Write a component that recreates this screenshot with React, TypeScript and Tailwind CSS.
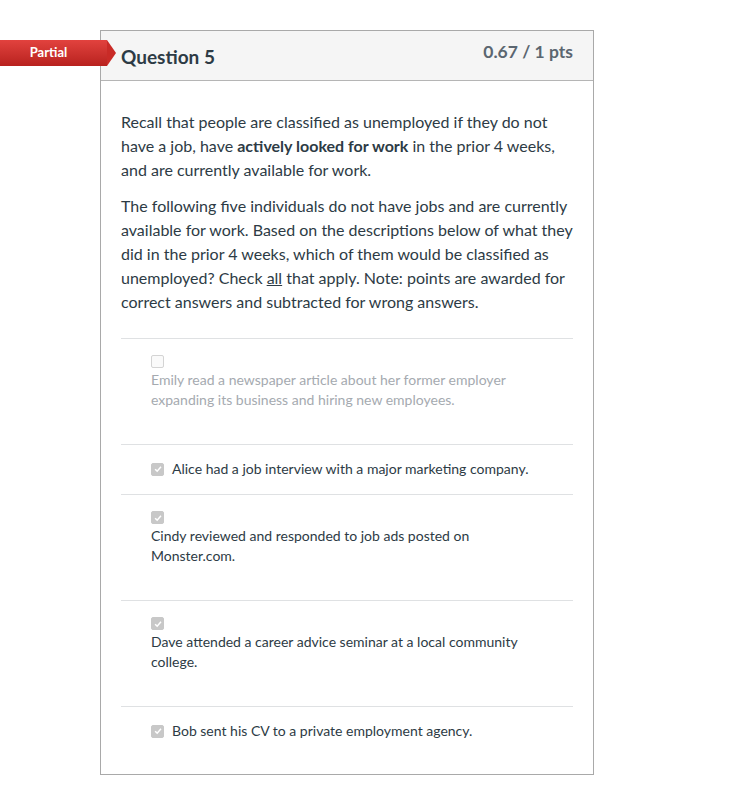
const answers = [
  {
    text: "Emily read a newspaper article about her former employer expanding its business and hiring new employees.",
    checked: false,
    inline: false,
  },
  { text: "Alice had a job interview with a major marketing company.", checked: true, inline: true },
  {
    text: "Cindy reviewed and responded to job ads posted on Monster.com.",
    checked: true,
    inline: false,
  },
  {
    text: "Dave attended a career advice seminar at a local community college.",
    checked: true,
    inline: false,
  },
  { text: "Bob sent his CV to a private employment agency.", checked: true, inline: true },
];

const Box = ({ checked }: { checked: boolean }) => (
  <span
    className={`inline-flex h-[13px] w-[13px] shrink-0 items-center justify-center rounded-[2px] border ${
      checked ? "border-[#c8c8c8] bg-[#c8c8c8]" : "border-[#d4d4d4] bg-[#fafafa]"
    }`}
  >
    {checked && (
      <svg viewBox="0 0 12 12" className="h-[10px] w-[10px]">
        <path d="M2.5 6.3 L5 8.6 L9.6 3.4" fill="none" stroke="#ffffff" strokeWidth="1.8" />
      </svg>
    )}
  </span>
);

const App = () => {
  return (
    <div className="min-h-[795px] bg-white font-['Lato','Noto_Sans',sans-serif] text-[#2d3b45]">
      <div className="relative pt-[30px]">
        {/* partial badge */}
        <div className="absolute left-0 top-[40px] flex h-[26px] items-center">
          <div className="flex h-[26px] w-[107px] items-center justify-center bg-gradient-to-b from-[#e2423e] to-[#b8211e] pr-[10px] text-[13px] font-bold text-white">
            Partial
          </div>
          <div className="h-0 w-0 border-y-[13px] border-l-[9px] border-y-transparent border-l-[#c92b27]" />
        </div>

        <div className="ml-[100px] w-[494px] border border-[#a9a9a9]">
          <div className="flex h-[50px] items-start justify-between border-b border-[#b5b5b5] bg-[#f5f5f5] px-[20px]">
            <div className="mt-[14px] text-[19px] font-bold leading-[24px] text-[#2d3b45]">Question 5</div>
            <div className="mt-[10px] text-[17.5px] font-bold leading-[22px] text-[#5b6670]">0.67 / 1 pts</div>
          </div>

          <div className="px-[20px] pb-[18px] pt-[29px]">
            <p className="text-[16px] leading-[24px]">
              Recall that people are classified as unemployed if they do not have a job, have{" "}
              <strong>actively looked for work</strong> in the prior 4 weeks, and are currently available for work.
            </p>
            <p className="mt-[12px] text-[16px] leading-[24px]">
              The following five individuals do not have jobs and are currently available for work. Based on the
              descriptions below of what they did in the prior 4 weeks, which of them would be classified as
              unemployed? Check <u>all</u> that apply. Note: points are awarded for correct answers and subtracted for
              wrong answers.
            </p>

            <div className="mt-[24px]">
              {answers.map((a, i) =>
                a.inline ? (
                  <div
                    key={i}
                    className="flex items-center gap-[8px] border-t border-[#dfe1e3] px-[30px] pb-[15px] pt-[14px] text-[14px] leading-[20px]"
                  >
                    <Box checked={a.checked} />
                    <span>{a.text}</span>
                  </div>
                ) : (
                  <div
                    key={i}
                    className={`border-t border-[#dfe1e3] px-[30px] pb-[34px] pt-[16px] text-[14px] leading-[20px] ${
                      a.checked ? "" : "text-[#a5aab0]"
                    }`}
                  >
                    <div className="mb-[2px] flex h-[13px]">
                      <Box checked={a.checked} />
                    </div>
                    <div>{a.text}</div>
                  </div>
                )
              )}
            </div>
          </div>
        </div>
      </div>
    </div>
  );
};

export default App;
